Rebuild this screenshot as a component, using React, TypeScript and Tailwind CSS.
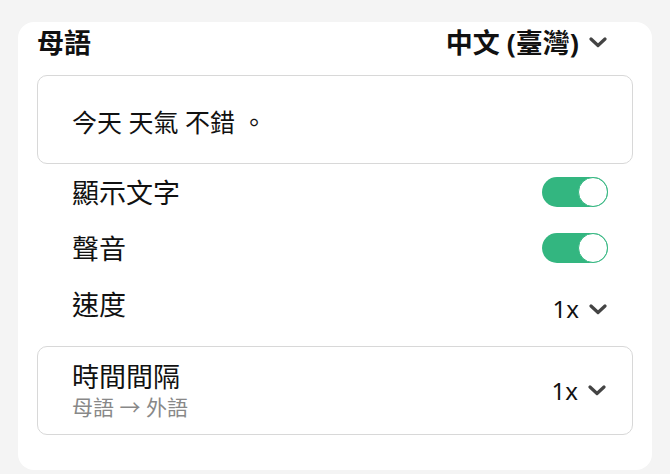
import React from "react";

const font = { fontFamily: '"Noto Sans", "Noto Sans CJK TC", sans-serif' };

function Chevron() {
  return (
    <svg width="18" height="11" viewBox="0 0 18 11" className="shrink-0">
      <path d="M2 2 L9 8.5 L16 2" fill="none" stroke="#444" strokeWidth="3.2" strokeLinecap="round" strokeLinejoin="round" />
    </svg>
  );
}

function Toggle() {
  return (
    <div className="w-[66px] h-[30px] rounded-full bg-[#33b680] flex items-center justify-end">
      <div className="w-[30px] h-[30px] rounded-full bg-white border-[1.5px] border-[#33b680]" />
    </div>
  );
}

export default function App() {
  return (
    <div className="w-[670px] h-[474px] bg-[#f4f4f4] pt-[12px] pl-[18px] text-[#111]" style={font}>
      <div className="w-[634px] h-[448px] bg-white rounded-[16px] px-[19px]">
        <div className="h-[40px] mt-[10px] flex items-center justify-between pr-[26px]">
          <span className="text-[27px] font-bold leading-none">母語</span>
          <div className="flex items-center gap-[10px]">
            <span className="text-[27px] font-bold leading-none">中文 (臺灣)</span>
            <Chevron />
          </div>
        </div>
        <div className="mt-[13px] h-[89px] border border-[#d8d8d8] rounded-[10px] flex items-center pl-[34px] pt-[6px]">
          <span className="text-[25px] leading-none">今天 天氣 不錯 。</span>
        </div>
        <div className="h-[56px] flex items-center justify-between pl-[35px] pr-[25px]">
          <span className="text-[27px] leading-none">顯示文字</span>
          <Toggle />
        </div>
        <div className="h-[56px] flex items-center justify-between pl-[35px] pr-[25px]">
          <span className="text-[27px] leading-none">聲音</span>
          <Toggle />
        </div>
        <div className="h-[56px] flex items-center justify-between pl-[35px] pr-[26px]">
          <span className="text-[27px] leading-none">速度</span>
          <div className="flex items-center gap-[10px] pt-[10px]">
            <span className="text-[24px] leading-none">1x</span>
            <Chevron />
          </div>
        </div>
        <div className="mt-[14px] h-[89px] border border-[#d8d8d8] rounded-[10px] flex items-center justify-between pl-[34px] pr-[26px]">
          <div className="flex flex-col gap-[3px]">
            <span className="text-[27px] leading-[30px]">時間間隔</span>
            <span className="text-[21px] leading-[24px] text-[#888]">母語 → 外語</span>
          </div>
          <div className="flex items-center gap-[10px]">
            <span className="text-[24px] leading-none">1x</span>
            <Chevron />
          </div>
        </div>
      </div>
    </div>
  );
}
